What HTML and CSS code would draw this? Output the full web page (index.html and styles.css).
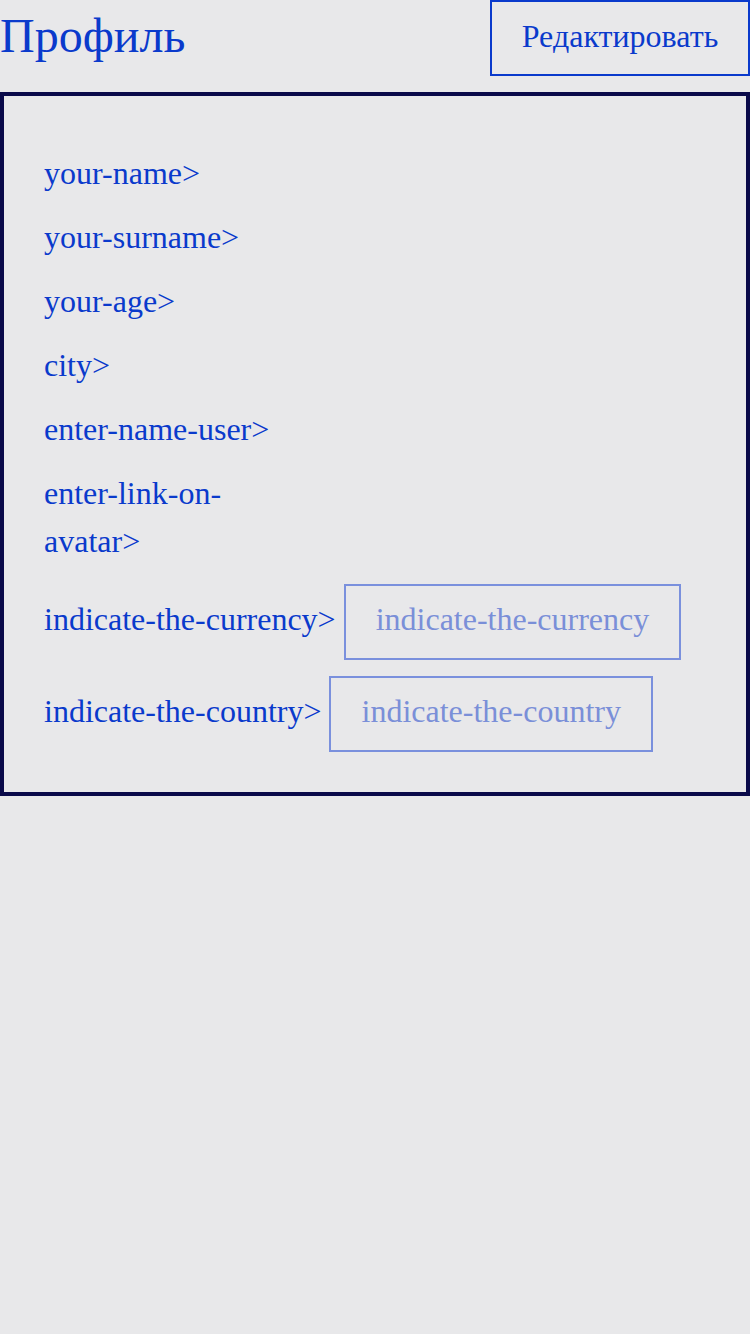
FILE: index.html
```html
<!DOCTYPE html>
<html lang="ru">
<head>
<meta charset="utf-8">
<title>Профиль</title>
<link rel="stylesheet" href="styles.css">
</head>
<body>
<header class="header">
  <h1 class="title">Профиль</h1>
  <button class="edit-btn" type="button">Редактировать</button>
</header>
<section class="panel">
  <div class="row"><span class="label">your-name&gt;</span></div>
  <div class="row"><span class="label">your-surname&gt;</span></div>
  <div class="row"><span class="label">your-age&gt;</span></div>
  <div class="row"><span class="label">city&gt;</span></div>
  <div class="row"><span class="label">enter-name-user&gt;</span></div>
  <div class="row"><span class="label label-narrow">enter-link-on-avatar&gt;</span></div>
  <div class="row row-field row-first-field"><span class="label">indicate-the-currency&gt;</span><span class="field">indicate-the-currency</span></div>
  <div class="row row-field"><span class="label">indicate-the-country&gt;</span><span class="field">indicate-the-country</span></div>
</section>
</body>
</html>
```
FILE: styles.css
```css
* { box-sizing: border-box; }
html, body {
  margin: 0;
  padding: 0;
  background: #e8e8ea;
  font-family: "Liberation Serif", "Times New Roman", serif;
  color: #0a3acc;
}
.header {
  display: flex;
  justify-content: space-between;
  align-items: flex-start;
  height: 92px;
}
.title {
  margin: 0;
  font-weight: normal;
  font-size: 48px;
  line-height: 72px;
  color: #0a3acc;
}
.edit-btn {
  background: transparent;
  border: 2px solid #0a3acc;
  color: #0a3acc;
  font-family: inherit;
  font-size: 32px;
  height: 76px;
  width: 260px;
  padding: 0 0 4px;
  line-height: 1;
  margin: 0;
}
.panel {
  border: 4px solid #0a0a4a;
  padding: 53px 40px 40px;
  display: flex;
  flex-direction: column;
  gap: 16px;
}
.row {
  display: flex;
  align-items: center;
  gap: 9px;
}
.row-field {
  align-items: flex-start;
  gap: 8px;
}
.row-field .label {
  margin-top: 11px;
}
.label {
  font-size: 32px;
  line-height: 48px;
}
.label-narrow {
  width: 240px;
}
.row-first-field { margin-top: 3px; }
.field {
  border: 2px solid #7a90dd;
  color: #7a8fd8;
  font-size: 32px;
  line-height: 48px;
  height: 76px;
  padding: 9px 30px 15px;
  white-space: nowrap;
}
```
